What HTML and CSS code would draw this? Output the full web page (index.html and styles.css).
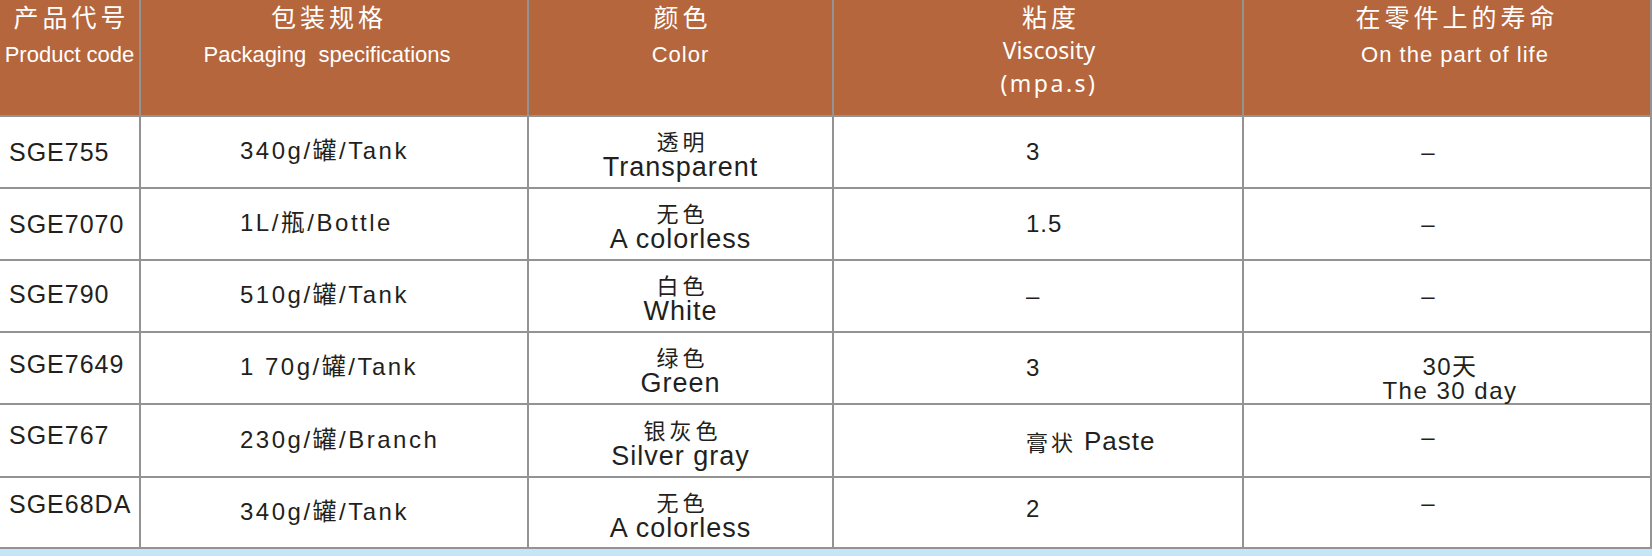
FILE: index.html
```html
<!DOCTYPE html>
<html lang="zh-CN">
<head>
<meta charset="utf-8">
<title>产品规格表</title>
<link rel="stylesheet" href="styles.css">
</head>
<body>
<div class="sheet">
  <div class="spec">
    <div class="hd">
      <div class="hd-zh">产品代号</div>
      <div class="hd-en">Product code</div>
    </div>
    <div class="hd hd-pack">
      <div class="hd-zh">包装规格</div>
      <div class="hd-en">Packaging&nbsp; specifications</div>
    </div>
    <div class="hd">
      <div class="hd-zh">颜色</div>
      <div class="hd-en hd-color">Color</div>
    </div>
    <div class="hd hd-visc">
      <div class="hd-zh">粘度</div>
      <div class="hd-en hd-noto">Viscosity</div>
      <div class="hd-unit">(mpa.s)</div>
    </div>
    <div class="hd hd-life">
      <div class="hd-zh">在零件上的寿命</div>
      <div class="hd-en hd-wide">On the part of life</div>
    </div>

    <div class="cell code">SGE755</div>
    <div class="cell pack">340g/罐/Tank</div>
    <div class="cell color"><span class="c-zh">透明</span><span class="c-en">Transparent</span></div>
    <div class="cell visc">3</div>
    <div class="cell life dash">–</div>

    <div class="cell code">SGE7070</div>
    <div class="cell pack">1L/瓶/Bottle</div>
    <div class="cell color"><span class="c-zh">无色</span><span class="c-en">A colorless</span></div>
    <div class="cell visc">1.5</div>
    <div class="cell life dash">–</div>

    <div class="cell code lift-2">SGE790</div>
    <div class="cell pack">510g/罐/Tank</div>
    <div class="cell color"><span class="c-zh">白色</span><span class="c-en">White</span></div>
    <div class="cell visc">–</div>
    <div class="cell life dash">–</div>

    <div class="cell code lift-4">SGE7649</div>
    <div class="cell pack">1 70g/罐/Tank</div>
    <div class="cell color"><span class="c-zh">绿色</span><span class="c-en">Green</span></div>
    <div class="cell visc">3</div>
    <div class="cell life bottom"><span class="l-zh">30天</span><span class="l-en">The 30 day</span></div>

    <div class="cell code lift-6">SGE767</div>
    <div class="cell pack">230g/罐/Branch</div>
    <div class="cell color"><span class="c-zh">银灰色</span><span class="c-en">Silver gray</span></div>
    <div class="cell visc"><span class="v-zh">膏状</span><span class="v-en">Paste</span></div>
    <div class="cell life dash lift-4">–</div>

    <div class="cell code lift-9">SGE68DA</div>
    <div class="cell pack">340g/罐/Tank</div>
    <div class="cell color"><span class="c-zh">无色</span><span class="c-en">A colorless</span></div>
    <div class="cell visc lift-4">2</div>
    <div class="cell life dash lift-10">–</div>
  </div>
  <div class="strip"></div>
</div>
</body>
</html>
```

FILE: styles.css
```css
html, body {
  margin: 0;
  padding: 0;
  background: #ffffff;
}

body {
  font-family: "Liberation Sans", "Noto Sans CJK SC", sans-serif;
  color: #231f20;
}

.sheet {
  width: 1652px;
}

.spec {
  display: grid;
  grid-template-columns: 139px 386px 303px 408px 406px;
  grid-template-rows: 115px 70px 70px 70px 70px 71px 69px;
  gap: 2px;
  padding: 0 2px 2px 0;
  background: #939393;
}

/* header */
.hd {
  background: #b5663c;
  color: #ffffff;
  display: flex;
  flex-direction: column;
  align-items: center;
}

.hd-pack {
  padding-right: 14px;
}

.hd-visc {
  padding-left: 22px;
}

.hd-life {
  padding-left: 16px;
}

.hd-zh {
  font-family: "Noto Sans CJK SC", sans-serif;
  font-size: 25px;
  line-height: 32px;
  letter-spacing: 4px;
  margin-right: -4px;
}

.hd-en {
  font-family: "Liberation Sans", sans-serif;
  font-size: 22px;
  line-height: 26px;
  margin-top: 10px;
  white-space: nowrap;
}

.hd-color {
  letter-spacing: 1px;
}

.hd-wide {
  letter-spacing: 1px;
}

.hd-noto {
  font-family: "Noto Sans", sans-serif;
  font-size: 23px;
  margin-top: 5px;
}

.hd-unit {
  font-family: "Noto Sans", sans-serif;
  font-size: 23px;
  line-height: 30px;
  margin-top: 5px;
  letter-spacing: 2.5px;
}

/* body cells */
.cell {
  background: #ffffff;
  display: flex;
  align-items: center;
  white-space: nowrap;
  line-height: 28px;
}

.code {
  padding-left: 9px;
  font-size: 25px;
  letter-spacing: 1px;
}

.pack {
  padding-left: 99px;
  padding-bottom: 2px;
  font-size: 24px;
  letter-spacing: 2.5px;
}

.color {
  flex-direction: column;
  justify-content: center;
  padding-top: 6px;
}

.c-zh {
  font-family: "Noto Sans CJK SC", sans-serif;
  font-size: 22px;
  line-height: 22px;
  letter-spacing: 4px;
  margin-right: -4px;
}

.c-en {
  font-size: 27px;
  line-height: 27px;
  margin-top: 3px;
  letter-spacing: 1px;
}

.visc {
  padding-left: 192px;
  font-size: 24px;
  letter-spacing: 1px;
}

.v-zh {
  font-family: "Noto Sans CJK SC", sans-serif;
  font-size: 22px;
  letter-spacing: 3px;
  margin-right: 8px;
}

.v-en {
  font-size: 26px;
  letter-spacing: 1px;
}

.life {
  justify-content: center;
  font-size: 24px;
}

.dash {
  padding-right: 38px;
}

.bottom {
  flex-direction: column;
  justify-content: flex-end;
  align-items: center;
  padding-left: 6px;
}

.l-zh {
  font-size: 24px;
  line-height: 24px;
  letter-spacing: 1.5px;
}

.l-en {
  font-size: 24px;
  line-height: 24px;
  letter-spacing: 1.5px;
}

.lift-2 { padding-bottom: 4px; }
.lift-4 { padding-bottom: 8px; }
.lift-6 { padding-bottom: 12px; }
.lift-9 { padding-bottom: 18px; }
.lift-10 { padding-bottom: 20px; }

.strip {
  height: 7px;
  background: #c6e6f8;
}
```
